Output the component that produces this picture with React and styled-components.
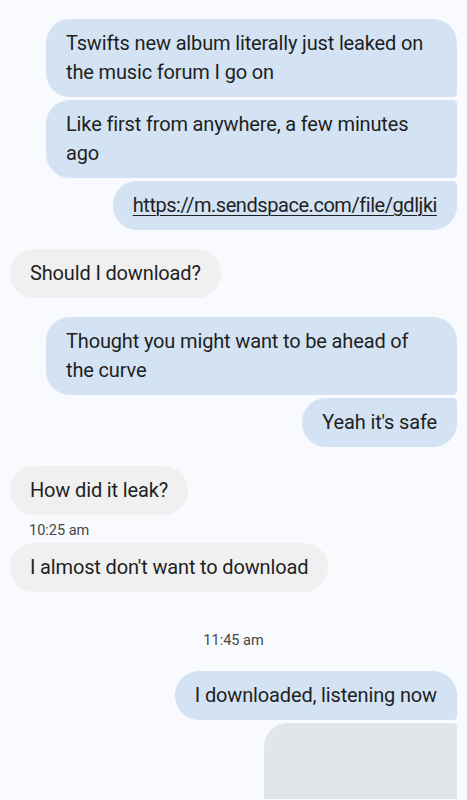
import styled, { createGlobalStyle } from "styled-components";

const Global = createGlobalStyle`
  html, body {
    margin: 0;
    padding: 0;
    background: #f9fafd;
    overflow: hidden;
  }
  body {
    font-family: Roboto, "Noto Sans", "Liberation Sans", sans-serif;
    color: #1f1f1f;
  }
`;

const messages = [
  { id: 1, from: "me", text: "Tswifts new album literally just leaked on the music forum I go on", pos: "first" },
  { id: 2, from: "me", text: "Like first from anywhere, a few minutes ago", pos: "middle" },
  { id: 3, from: "me", text: "https://m.sendspace.com/file/gdljki", pos: "last", link: true },
  { id: 4, from: "them", text: "Should I download?", pos: "single" },
  { id: 5, from: "me", text: "Thought you might want to be ahead of the curve", pos: "first" },
  { id: 6, from: "me", text: "Yeah it's safe", pos: "last" },
  { id: 7, from: "them", text: "How did it leak?", pos: "single" },
  { id: 8, stamp: "10:25 am", side: "left" },
  { id: 9, from: "them", text: "I almost don't want to download", pos: "single" },
  { id: 10, stamp: "11:45 am", side: "center" },
  { id: 11, from: "me", text: "I downloaded, listening now", pos: "first" },
  { id: 12, from: "me", image: true, pos: "last" },
];

// sent bubbles get small corners on the side where they join the group
const radius = (from, pos) => {
  if (from === "them") return "24px";
  if (pos === "first") return "24px 24px 4px 24px";
  if (pos === "middle") return "24px 4px 4px 24px";
  if (pos === "last") return "24px 4px 24px 24px";
  return "24px";
};

export default function App() {
  return (
    <>
      <Global />
      <Thread>
        {messages.map((m, i) => {
          const prev = messages[i - 1];
          const grouped = prev && prev.from === m.from && !prev.stamp && !m.stamp;
          if (m.stamp) {
            return (
              <Stamp key={m.id} $side={m.side}>
                {m.stamp}
              </Stamp>
            );
          }
          return (
            <Row key={m.id} $from={m.from} $grouped={grouped} $afterStamp={prev && prev.stamp}>
              {m.image ? (
                <ImageBox />
              ) : (
                <Bubble $from={m.from} $r={radius(m.from, m.pos)}>
                  {m.link ? <Link>{m.text}</Link> : m.text}
                </Bubble>
              )}
            </Row>
          );
        })}
      </Thread>
    </>
  );
}

const Thread = styled.div`
  display: flex;
  flex-direction: column;
  padding: 19px 10px 0 10px;
  height: 800px;
  box-sizing: border-box;
  overflow: hidden;
`;

const Row = styled.div`
  display: flex;
  justify-content: ${(p) => (p.$from === "me" ? "flex-end" : "flex-start")};
  margin-top: ${(p) => (p.$grouped ? "3px" : p.$afterStamp ? "0" : "19px")};
  &:first-child {
    margin-top: 0;
  }
`;

const Bubble = styled.div`
  max-width: 371px;
  padding: 10px 20px;
  font-size: 20px;
  line-height: 29px;
  letter-spacing: -0.15px;
  border-radius: ${(p) => p.$r};
  background: ${(p) => (p.$from === "me" ? "#d3e3f4" : "#f0f0f1")};
  color: #1f1f1f;
`;

const Link = styled.span`
  letter-spacing: -0.45px;
  text-decoration: underline;
  text-underline-offset: 3px;
  text-decoration-thickness: 1px;
`;

const ImageBox = styled.div`
  width: 193px;
  height: 76px;
  background: #e3e6e9;
  border-radius: 24px 4px 0 0;
`;

const Stamp = styled.div`
  font-size: 14.5px;
  line-height: 20px;
  color: #444746;
  padding: ${(p) => (p.$side === "center" ? "39px 0 20px" : "6px 0 2px 19px")};
  text-align: ${(p) => (p.$side === "center" ? "center" : "left")};
`;
